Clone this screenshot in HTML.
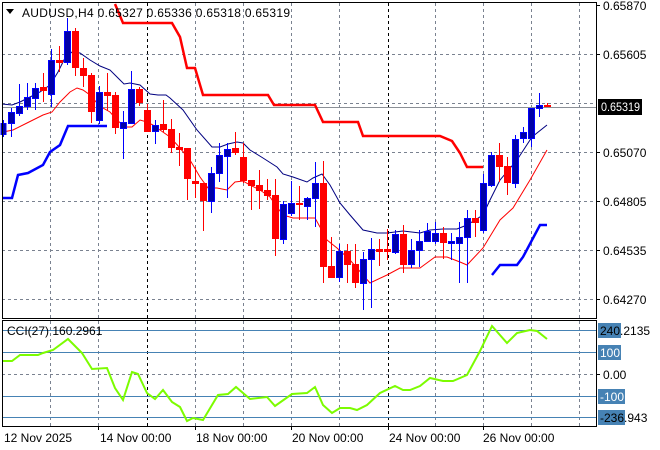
<!DOCTYPE html>
<html><head><meta charset="utf-8"><style>
html,body{margin:0;padding:0;background:#fff;}
svg{display:block;font-family:"Liberation Sans",sans-serif;}
</style></head><body>
<svg width="660" height="450" viewBox="0 0 660 450" xmlns="http://www.w3.org/2000/svg">
<rect width="660" height="450" fill="#fff"/>
<g stroke="#7a8290" stroke-width="1" stroke-dasharray="3,3" fill="none">
<path d="M2 54.5H596M2 103.5H596M2 152.5H596M2 201.5H596M2 250.5H596M2 299.5H596"/>
<path d="M50.5 3V318M98.5 3V318M195.5 3V318M243.5 3V318M291.5 3V318M339.5 3V318M435.5 3V318M483.5 3V318M531.5 3V318M579.5 3V318"/>
<path d="M50.5 321V426M98.5 321V426M195.5 321V426M243.5 321V426M291.5 321V426M339.5 321V426M435.5 321V426M483.5 321V426M531.5 321V426M579.5 321V426M2 374.5H596"/>
</g>
<g stroke="#000" stroke-width="1" stroke-dasharray="3,3"><path d="M147.5 3V318M388.5 3V318M147.5 321V426M388.5 321V426"/></g>
<path d="M2 107.5H596" stroke="#8a8f96" stroke-width="1"/>
<polyline fill="none" stroke="#ff0000" stroke-width="2.5" points="115,4 123,23 172,23 180,37 187,68 195,68 203,95 268,95 274,105 315,105 323,122 358,122 363,136 440,136 452,141 460,153 467,167 483,167"/>
<polyline fill="none" stroke="#0000ff" stroke-width="2.5" points="3,198 12,198 18,175 28,173 43,165 50,152 60,145 68,126 107,126"/>
<polyline fill="none" stroke="#0000ff" stroke-width="2.5" points="492,275 500,265 517,265 523,257 540,225 547,225"/>
<polyline fill="none" stroke="#000080" stroke-width="1" points="2,104 12,105 20,102 30,97 40,92 50,85 58,72 65,58 72,52 80,53 90,60 100,66 110,70 118,78 124,84 130,83 140,85 150,94 158,95 166,95 170,98 183,110 197,130 212,147 220,147 228,144 237,142 243,143 250,150 263,158 277,167 283,174 293,177 307,182 313,178 322,174 330,185 340,203 350,215 363,230 377,233 387,233 403,231 420,233 430,230 443,229 457,229 467,225 483,215 490,200 500,180 517,160 532,137 547,125"/>
<polyline fill="none" stroke="#ff0000" stroke-width="1" points="3,132 13,130 27,123 43,115 52,112 60,102 70,92 77,88 83,90 90,95 97,103 103,108 110,112 117,120 125,127 132,127 140,120 147,122 153,125 160,130 170,137 180,148 190,160 200,177 208,188 217,188 227,190 235,182 243,181 250,185 260,190 270,197 277,207 283,215 293,218 315,218 320,227 327,240 337,248 350,260 370,283 387,275 400,268 420,268 435,257 447,257 460,262 467,265 483,248 500,220 513,208 530,180 547,150"/>
<g stroke-width="1">
<path stroke="#0000ff" d="M3.5 120V137M11.5 108V137M19.5 84V116M27.5 83V110M35.5 83V110M51.5 49V107M67.5 18V65M99.5 86V124M123.5 111V159M131.5 71V123M155.5 120V144M211.5 167V213M219.5 143V182M227.5 143V198M283.5 201V244M291.5 181V216M307.5 197V220M315.5 162V227M339.5 244V282M363.5 252V310M371.5 238V308M395.5 230V254M411.5 239V268M419.5 230V267M427.5 223V242M435.5 222V244M451.5 233V260M459.5 222V283M467.5 210V283M483.5 174V233M491.5 152V187M515.5 135V188M523.5 127V143M531.5 108V147M539.5 93V117"/>
<path stroke="#ff0000" d="M43.5 73V102M59.5 46V72M75.5 28V76M83.5 58V87M91.5 73V123M107.5 73V111M115.5 92V134M139.5 87V106M147.5 104V132M163.5 100V132M171.5 119V153M179.5 133V166M187.5 148V200M195.5 167V198M203.5 183V231M235.5 132V155M243.5 143V183M251.5 180V210M259.5 170V209M267.5 179V200M275.5 179V256M299.5 186V220M323.5 161V283M331.5 237V278M347.5 244V283M355.5 244V288M379.5 239V266M387.5 229V260M403.5 225V273M443.5 227V259M475.5 210V237M499.5 143V182M507.5 157V195M547.5 103V107"/>
</g>
<g fill="#0000a8" stroke="#0000ff" stroke-width="1">
<rect x="1" y="123.5" width="5" height="11"/>
<rect x="8.5" y="112.5" width="6" height="11"/>
<rect x="16.5" y="106.5" width="6" height="7"/>
<rect x="24.5" y="97.5" width="6" height="9"/>
<rect x="32.5" y="88.5" width="6" height="10"/>
<rect x="48.5" y="60.5" width="6" height="34"/>
<rect x="64.5" y="31.5" width="6" height="31"/>
<rect x="96.5" y="92.5" width="6" height="28"/>
<rect x="120.5" y="122.5" width="6" height="6"/>
<rect x="128.5" y="89.5" width="6" height="34"/>
<rect x="152.5" y="125.5" width="6" height="6"/>
<rect x="208.5" y="173.5" width="6" height="28"/>
<rect x="216.5" y="155.5" width="6" height="18"/>
<rect x="224.5" y="149.5" width="6" height="7"/>
<rect x="280.5" y="204.5" width="6" height="35"/>
<rect x="288.5" y="203.5" width="6" height="10"/>
<rect x="304.5" y="198.5" width="6" height="8"/>
<rect x="312.5" y="183.5" width="6" height="15"/>
<rect x="336.5" y="251.5" width="6" height="26"/>
<rect x="360.5" y="259.5" width="6" height="24"/>
<rect x="368.5" y="249.5" width="6" height="10"/>
<rect x="392.5" y="234.5" width="6" height="18"/>
<rect x="408.5" y="250.5" width="6" height="14"/>
<rect x="416.5" y="241.5" width="6" height="9"/>
<rect x="424.5" y="231.5" width="6" height="10"/>
<rect x="432.5" y="233.5" width="6" height="8"/>
<rect x="448.5" y="241.5" width="6" height="2"/>
<rect x="456.5" y="237.5" width="6" height="6"/>
<rect x="464.5" y="218.5" width="6" height="19"/>
<rect x="480.5" y="183.5" width="6" height="47"/>
<rect x="488.5" y="155.5" width="6" height="30"/>
<rect x="512.5" y="139.5" width="6" height="44"/>
<rect x="520.5" y="132.5" width="6" height="6"/>
<rect x="528.5" y="108.5" width="6" height="30"/>
<rect x="536.5" y="105.5" width="6" height="3"/>
</g>
<g fill="#ff0000">
<rect x="40" y="87" width="7" height="4"/>
<rect x="56" y="60" width="7" height="3"/>
<rect x="72" y="31" width="7" height="37"/>
<rect x="80" y="68" width="7" height="8"/>
<rect x="88" y="75" width="7" height="37"/>
<rect x="104" y="92" width="7" height="4"/>
<rect x="112" y="95" width="7" height="33"/>
<rect x="136" y="89" width="7" height="14"/>
<rect x="144" y="110" width="7" height="22"/>
<rect x="160" y="124" width="7" height="6"/>
<rect x="168" y="129" width="7" height="19"/>
<rect x="176" y="147" width="7" height="3"/>
<rect x="184" y="148" width="7" height="31"/>
<rect x="192" y="181" width="7" height="3"/>
<rect x="200" y="183" width="7" height="18"/>
<rect x="232" y="148" width="7" height="5"/>
<rect x="240" y="157" width="7" height="24"/>
<rect x="248" y="180" width="7" height="6"/>
<rect x="256" y="185" width="7" height="6"/>
<rect x="264" y="190" width="7" height="6"/>
<rect x="272" y="195" width="7" height="44"/>
<rect x="296" y="203" width="7" height="2"/>
<rect x="320" y="183" width="7" height="84"/>
<rect x="328" y="266" width="7" height="12"/>
<rect x="344" y="251" width="7" height="14"/>
<rect x="352" y="264" width="7" height="19"/>
<rect x="376" y="249" width="7" height="3"/>
<rect x="384" y="249" width="7" height="3"/>
<rect x="400" y="234" width="7" height="31"/>
<rect x="440" y="233" width="7" height="10"/>
<rect x="472" y="218" width="7" height="5"/>
<rect x="496" y="155" width="7" height="12"/>
<rect x="504" y="166" width="7" height="17"/>
<rect x="544" y="105" width="7" height="2"/>
</g>
<g stroke="#4682b4" stroke-width="1"><path d="M2 330.5H596M2 352.5H596M2 396.5H596M2 417.5H596"/></g>
<polyline fill="none" stroke="#7cfc00" stroke-width="2" points="2,361 12,361 20,355 38,355 43,353 53,350 68,339 82,353 92,369 107,368 115,388 123,400 132,372 138,374 147,393 155,399 163,390 172,402 180,407 187,421 193,418 203,420 218,395 228,394 236,387 250,399 267,397 275,406 292,394 307,393 315,387 323,405 332,413 340,408 350,408 357,410 367,405 380,393 395,386 403,390 410,390 420,386 430,378 443,381 453,381 467,375 480,351 492,326 507,343 517,333 530,330 537,331 547,339"/>
<g fill="none" stroke="#000" stroke-width="1">
<rect x="2.5" y="2.5" width="594" height="316"/>
<rect x="2.5" y="320.5" width="594" height="106"/>
</g>
<g stroke="#000"><path d="M596 5.5H600M596 54.5H600M596 152.5H600M596 201.5H600M596 250.5H600M596 299.5H600M596 374.5H600"/></g>
<g font-size="12" fill="#000">
<text x="603" y="10">0.65870</text>
<text x="603" y="59">0.65605</text>
<text x="603" y="157">0.65070</text>
<text x="603" y="206">0.64805</text>
<text x="603" y="255">0.64535</text>
<text x="603" y="304">0.64270</text>
<text x="603" y="379">0.00</text>
</g>
<rect x="598" y="99" width="44" height="16" fill="#000"/>
<text x="601" y="111" font-size="12" fill="#fff" textLength="39" lengthAdjust="spacingAndGlyphs">0.65319</text>
<rect x="598" y="323" width="23" height="15" fill="#4682b4"/>
<text x="600" y="335" font-size="12" fill="#000">240.2135</text>
<rect x="598" y="345" width="23" height="15" fill="#4682b4"/>
<text x="600" y="357" font-size="12" fill="#fff">100</text>
<rect x="598" y="389" width="27" height="15" fill="#4682b4"/>
<text x="600" y="401" font-size="12" fill="#fff">-100</text>
<rect x="598" y="410" width="27" height="15" fill="#4682b4"/>
<text x="600" y="422" font-size="12" fill="#000">-236.943</text>
<g stroke="#000"><path d="M98.5 426V430M195.5 426V430M291.5 426V430M388.5 426V430M483.5 426V430"/></g>
<g font-size="12" fill="#000">
<text x="4" y="442">12 Nov 2025</text>
<text x="100" y="442">14 Nov 00:00</text>
<text x="196" y="442">18 Nov 00:00</text>
<text x="292" y="442">20 Nov 00:00</text>
<text x="389" y="442">24 Nov 00:00</text>
<text x="483" y="442">26 Nov 00:00</text>
</g>
<path d="M6 9H14L10 14Z" fill="#000"/>
<text x="22" y="17" font-size="12" fill="#000" textLength="268" lengthAdjust="spacing">AUDUSD,H4  0.65327 0.65336 0.65318 0.65319</text>
<text x="7" y="335" font-size="12" fill="#000">CCI(27) 160.2961</text>
</svg>
</body></html>
